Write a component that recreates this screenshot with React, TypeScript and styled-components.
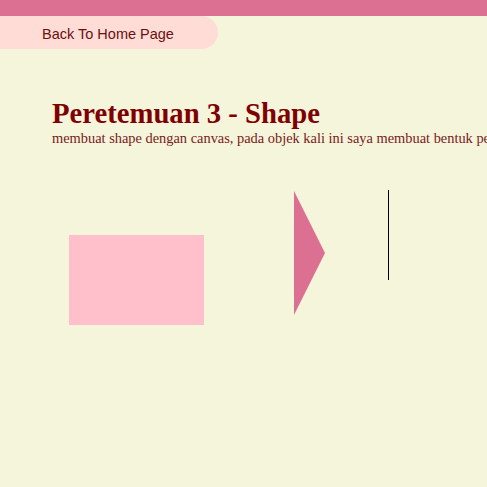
import styled, { createGlobalStyle } from "styled-components";

const GlobalStyle = createGlobalStyle`
  html, body {
    margin: 0;
    padding: 0;
    background: #f5f5dc;
    overflow: hidden;
  }
`;

const Page = styled.div`
  width: 487px;
  height: 487px;
  background: #f5f5dc;
  overflow: hidden;
`;

const TopBar = styled.div`
  height: 16px;
  background: #db7093;
`;

const BackButton = styled.a`
  display: flex;
  align-items: center;
  width: 176px;
  height: 33px;
  padding: 2px 0 0 42px;
  box-sizing: content-box;
  height: 31px;
  background: #ffdcd6;
  border-radius: 0 17px 17px 0;
  color: #6b1010;
  font-family: "Liberation Sans", Arial, sans-serif;
  font-size: 14.5px;
  text-decoration: none;
`;

const Content = styled.section`
  padding: 49px 0 0 52px;
  font-family: "Liberation Serif", "Times New Roman", serif;
  color: #800000;
`;

const Title = styled.h1`
  margin: 0;
  font-size: 28.7px;
  font-weight: bold;
  line-height: 30px;
  white-space: nowrap;
`;

const Subtitle = styled.p`
  margin: 0;
  font-size: 14.4px;
  line-height: 18px;
  padding-top: 1px;
  white-space: nowrap;
  color: #7a1a1a;
`;

const Canvas = styled.svg`
  display: block;
  margin-top: 43px;
  margin-left: -52px;
`;

export default function App() {
  return (
    <Page>
      <GlobalStyle />
      <TopBar />
      <BackButton href="#">Back To Home Page</BackButton>
      <Content>
        <Title>Peretemuan 3 - Shape</Title>
        <Subtitle>
          membuat shape dengan canvas, pada objek kali ini saya membuat bentuk persegi panjang, segitiga dan garis
        </Subtitle>
        <Canvas width={487} height={160} viewBox="0 190 487 160">
          <rect x={69} y={235} width={135} height={90} fill="#ffc0cb" />
          <polygon points="294,191 325,253 294,315" fill="#db7093" />
          <line x1={388.5} y1={190} x2={388.5} y2={280} stroke="#000" strokeWidth={1} />
        </Canvas>
      </Content>
    </Page>
  );
}
